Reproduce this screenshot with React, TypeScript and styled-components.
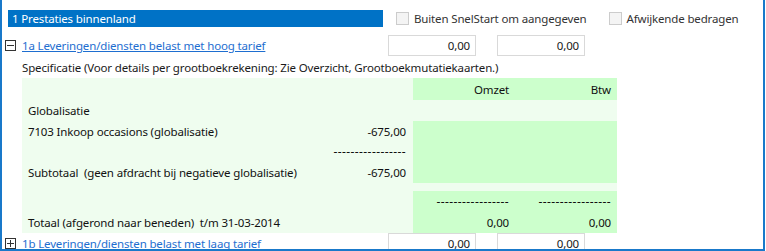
import styled, { createGlobalStyle } from "styled-components";

const GlobalStyle = createGlobalStyle`
  body {
    margin: 0;
    background: #ffffff;
    font-family: "Noto Sans", "Open Sans", sans-serif;
    font-size: 11.5px;
    letter-spacing: -0.15px;
    color: #1a1a1a;
  }
`;

const Frame = styled.div`
  width: 765px;
  height: 251px;
  box-sizing: border-box;
  border: 2px solid #1979ca;
  border-top: none;
  padding-top: 10px;
  overflow: hidden;
`;

const TopRow = styled.div`
  display: flex;
  align-items: center;
  height: 17px;
`;

const SectionBar = styled.div`
  width: 375px;
  height: 17px;
  margin-left: 6px;
  padding-left: 4px;
  box-sizing: border-box;
  background: #0072c6;
  color: #ffffff;
  display: flex;
  align-items: center;
`;

const CheckItem = styled.label<{ $offset: number }>`
  display: flex;
  align-items: center;
  gap: 5px;
  margin-left: ${(p) => p.$offset}px;
  color: #333333;
`;

const CheckBox = styled.span`
  width: 11px;
  height: 11px;
  border: 1px solid #cccccc;
  background: #f4f4f4;
`;

const GroupRow = styled.div<{ $top: number }>`
  display: grid;
  grid-template-columns: 20px 366px 88px 21px 88px;
  align-items: center;
  height: 21px;
  margin-top: ${(p) => p.$top}px;
`;

const Expander = styled.span`
  width: 9px;
  height: 9px;
  margin-left: 3px;
  border: 1px solid #333333;
  display: flex;
  align-items: center;
  justify-content: center;
`;

const GroupLink = styled.a`
  color: #1e6ed0;
  text-decoration: underline;
  cursor: pointer;
`;

const AmountInput = styled.div<{ $col: number }>`
  grid-column: ${(p) => p.$col};
  height: 21px;
  box-sizing: border-box;
  border: 1px solid #d9d9d9;
  display: flex;
  align-items: center;
  justify-content: flex-end;
  padding-right: 5px;
  color: #1a1a1a;
`;

const SpecNote = styled.div`
  height: 22px;
  display: flex;
  align-items: center;
  padding-left: 20px;
  color: #1a1a1a;
`;

const SpecTable = styled.div`
  margin-left: 20px;
  width: 595px;
  display: grid;
  grid-template-columns: 391px 102px 102px;
  color: #111111;
`;

const Cell = styled.div<{ $h: number; $dark?: boolean; $right?: boolean; $pad?: number }>`
  height: ${(p) => p.$h}px;
  background: ${(p) => (p.$dark ? "#ccffcc" : "#effdef")};
  display: flex;
  align-items: center;
  justify-content: ${(p) => (p.$right ? "flex-end" : "space-between")};
  padding: 0 ${(p) => p.$pad ?? 6}px 0 6px;
  white-space: pre;
`;

const Dashes = styled.span`
  font-size: 12px;
  letter-spacing: 0.4px;
`;

const MinusIcon = () => (
  <svg width="7" height="7" viewBox="0 0 7 7">
    <path d="M0 3.5H7" stroke="#333" strokeWidth="1" />
  </svg>
);

const PlusIcon = () => (
  <svg width="7" height="7" viewBox="0 0 7 7">
    <path d="M0 3.5H7M3.5 0V7" stroke="#333" strokeWidth="1" />
  </svg>
);

const dash = "-----------------";

const App = () => {
  return (
    <>
      <GlobalStyle />
      <Frame>
        <TopRow>
          <SectionBar>1 Prestaties binnenland</SectionBar>
          <CheckItem $offset={13}>
            <CheckBox />
            Buiten SnelStart om aangegeven
          </CheckItem>
          <CheckItem $offset={22}>
            <CheckBox />
            Afwijkende bedragen
          </CheckItem>
        </TopRow>

        <GroupRow $top={8}>
          <Expander>
            <MinusIcon />
          </Expander>
          <GroupLink>1a Leveringen/diensten belast met hoog tarief</GroupLink>
          <AmountInput $col={3}>0,00</AmountInput>
          <AmountInput $col={5}>0,00</AmountInput>
        </GroupRow>

        <SpecNote>
          Specificatie (Voor details per grootboekrekening: Zie Overzicht, Grootboekmutatiekaarten.)
        </SpecNote>

        <SpecTable>
          <Cell $h={22} />
          <Cell $h={22} $dark $right>Omzet</Cell>
          <Cell $h={22} $dark $right>Btw</Cell>

          <Cell $h={21}>Globalisatie</Cell>
          <Cell $h={21} />
          <Cell $h={21} />

          <Cell $h={20} $pad={7}>
            <span>7103 Inkoop occasions (globalisatie)</span>
            <span>-675,00</span>
          </Cell>
          <Cell $h={20} $dark />
          <Cell $h={20} $dark />

          <Cell $h={21} $right $pad={7}>
            <Dashes>{dash}</Dashes>
          </Cell>
          <Cell $h={21} $dark />
          <Cell $h={21} $dark />

          <Cell $h={21} $pad={7}>
            <span>Subtotaal  (geen afdracht bij negatieve globalisatie)</span>
            <span>-675,00</span>
          </Cell>
          <Cell $h={21} $dark />
          <Cell $h={21} $dark />

          <Cell $h={8} />
          <Cell $h={8} />
          <Cell $h={8} />

          <Cell $h={21} />
          <Cell $h={21} $dark $right>
            <Dashes>{dash}</Dashes>
          </Cell>
          <Cell $h={21} $dark $right>
            <Dashes>{dash}</Dashes>
          </Cell>

          <Cell $h={21}>
            <span>Totaal (afgerond naar beneden)  t/m 31-03-2014</span>
          </Cell>
          <Cell $h={21} $dark $right>0,00</Cell>
          <Cell $h={21} $dark $right>0,00</Cell>
        </SpecTable>

        <GroupRow $top={0}>
          <Expander>
            <PlusIcon />
          </Expander>
          <GroupLink>1b Leveringen/diensten belast met laag tarief</GroupLink>
          <AmountInput $col={3}>0,00</AmountInput>
          <AmountInput $col={5}>0,00</AmountInput>
        </GroupRow>
      </Frame>
    </>
  );
};

export default App;
